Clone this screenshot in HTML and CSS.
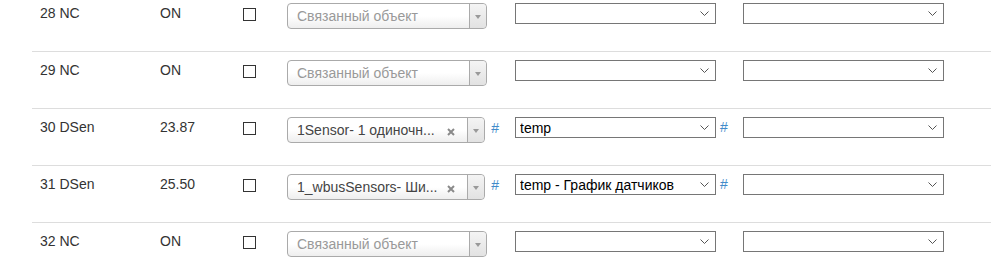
FILE: index.html
```html
<!DOCTYPE html>
<html lang="ru">
<head>
  <meta charset="UTF-8" />
  <meta name="viewport" content="width=device-width, initial-scale=1.0"/>
  <title>Порты</title>
  <link rel="stylesheet" href="styles.css">
</head>
<body>

  <div class="ports">

    <div class="row">
      <div class="cell">28 NC</div>
      <div class="cell">ON</div>
      <div class="cell"><input type="checkbox" class="chk"></div>
      <div class="cell">
        <div class="s2">
          <span class="s2-text empty">Связанный объект</span>
          <span class="s2-arrow"><b></b></span>
        </div>
      </div>
      <div class="cell">
        <span class="sel-wrap"><select class="sel"><option></option></select><svg class="chev" width="9" height="5" viewBox="0 0 9 5"><path d="M0.5 0.5L4.5 4.5L8.5 0.5" fill="none" stroke="#555"/></svg></span>
      </div>
      <div class="cell">
        <span class="sel-wrap"><select class="sel"><option></option></select><svg class="chev" width="9" height="5" viewBox="0 0 9 5"><path d="M0.5 0.5L4.5 4.5L8.5 0.5" fill="none" stroke="#555"/></svg></span>
      </div>
    </div>

    <div class="row">
      <div class="cell">29 NC</div>
      <div class="cell">ON</div>
      <div class="cell"><input type="checkbox" class="chk"></div>
      <div class="cell">
        <div class="s2">
          <span class="s2-text empty">Связанный объект</span>
          <span class="s2-arrow"><b></b></span>
        </div>
      </div>
      <div class="cell">
        <span class="sel-wrap"><select class="sel"><option></option></select><svg class="chev" width="9" height="5" viewBox="0 0 9 5"><path d="M0.5 0.5L4.5 4.5L8.5 0.5" fill="none" stroke="#555"/></svg></span>
      </div>
      <div class="cell">
        <span class="sel-wrap"><select class="sel"><option></option></select><svg class="chev" width="9" height="5" viewBox="0 0 9 5"><path d="M0.5 0.5L4.5 4.5L8.5 0.5" fill="none" stroke="#555"/></svg></span>
      </div>
    </div>

    <div class="row">
      <div class="cell">30 DSen</div>
      <div class="cell">23.87</div>
      <div class="cell"><input type="checkbox" class="chk"></div>
      <div class="cell">
        <div class="s2">
          <span class="s2-text">1Sensor- 1 одиночн...</span>
          <span class="s2-clear"><svg width="8" height="8" viewBox="0 0 8 8"><path d="M1 1L7 7M7 1L1 7" stroke="#8a8a8a" stroke-width="2"/></svg></span>
          <span class="s2-arrow"><b></b></span>
        </div>
        <a class="hash" href="#">#</a>
      </div>
      <div class="cell">
        <span class="sel-wrap"><select class="sel"><option>temp</option></select><svg class="chev" width="9" height="5" viewBox="0 0 9 5"><path d="M0.5 0.5L4.5 4.5L8.5 0.5" fill="none" stroke="#555"/></svg></span>
        <a class="hash sm" href="#">#</a>
      </div>
      <div class="cell">
        <span class="sel-wrap"><select class="sel"><option></option></select><svg class="chev" width="9" height="5" viewBox="0 0 9 5"><path d="M0.5 0.5L4.5 4.5L8.5 0.5" fill="none" stroke="#555"/></svg></span>
      </div>
    </div>

    <div class="row">
      <div class="cell">31 DSen</div>
      <div class="cell">25.50</div>
      <div class="cell"><input type="checkbox" class="chk"></div>
      <div class="cell">
        <div class="s2">
          <span class="s2-text">1_wbusSensors- Ши...</span>
          <span class="s2-clear"><svg width="8" height="8" viewBox="0 0 8 8"><path d="M1 1L7 7M7 1L1 7" stroke="#8a8a8a" stroke-width="2"/></svg></span>
          <span class="s2-arrow"><b></b></span>
        </div>
        <a class="hash" href="#">#</a>
      </div>
      <div class="cell">
        <span class="sel-wrap"><select class="sel"><option>temp - График датчиков</option></select><svg class="chev" width="9" height="5" viewBox="0 0 9 5"><path d="M0.5 0.5L4.5 4.5L8.5 0.5" fill="none" stroke="#555"/></svg></span>
        <a class="hash sm" href="#">#</a>
      </div>
      <div class="cell">
        <span class="sel-wrap"><select class="sel"><option></option></select><svg class="chev" width="9" height="5" viewBox="0 0 9 5"><path d="M0.5 0.5L4.5 4.5L8.5 0.5" fill="none" stroke="#555"/></svg></span>
      </div>
    </div>

    <div class="row">
      <div class="cell">32 NC</div>
      <div class="cell">ON</div>
      <div class="cell"><input type="checkbox" class="chk"></div>
      <div class="cell">
        <div class="s2">
          <span class="s2-text empty">Связанный объект</span>
          <span class="s2-arrow"><b></b></span>
        </div>
      </div>
      <div class="cell">
        <span class="sel-wrap"><select class="sel"><option></option></select><svg class="chev" width="9" height="5" viewBox="0 0 9 5"><path d="M0.5 0.5L4.5 4.5L8.5 0.5" fill="none" stroke="#555"/></svg></span>
      </div>
      <div class="cell">
        <span class="sel-wrap"><select class="sel"><option></option></select><svg class="chev" width="9" height="5" viewBox="0 0 9 5"><path d="M0.5 0.5L4.5 4.5L8.5 0.5" fill="none" stroke="#555"/></svg></span>
      </div>
    </div>

  </div>

</body>
</html>
```

FILE: styles.css
```css
*{margin:0;padding:0;box-sizing:border-box;}
body{font-family:'Liberation Sans',Arial,sans-serif;font-size:14px;line-height:20px;color:#333;background:#fff;overflow:hidden;}

.ports{margin:-6px 0 0 32px;}
.row{display:grid;grid-template-columns:120px 83px 44px 228px 228px 1fr;height:57px;border-top:1px solid #ddd;}
.cell{padding:8px;display:flex;align-items:flex-start;}

.chk{appearance:none;-webkit-appearance:none;width:13px;height:13px;border:1px solid #333;background:#fff;margin-top:5px;}

/* select2-like box */
.s2{display:flex;align-items:center;width:200px;height:26px;border:1px solid #aaa;border-radius:4px;background:linear-gradient(to bottom,#fff 0%,#fff 50%,#eee 100%);}
.s2-text{flex:1;min-width:0;padding-left:9px;white-space:nowrap;color:#444;}
.s2-text.empty{color:#999;}
.s2-clear{width:20px;margin-right:6px;display:flex;justify-content:center;padding-top:3px;}
.s2-arrow{width:17px;height:100%;border-left:1px solid #aaa;border-radius:0 4px 4px 0;background:linear-gradient(to bottom,#f4f4f4,#e2e2e2);display:flex;align-items:center;justify-content:center;}
.s2-arrow b{width:0;height:0;border-left:3px solid transparent;border-right:3px solid transparent;border-top:4px solid #999;margin-top:1px;}

.hash{color:#428bca;text-decoration:none;margin-left:6px;line-height:22px;}
.hash.sm{margin-left:4px;line-height:21px;}

/* plain select with a thin chevron */
.sel-wrap{position:relative;display:block;width:201px;height:21px;}
.sel{appearance:none;-webkit-appearance:none;display:block;width:201px;height:21px;padding:0 18px 0 4px;border:1px solid #767676;border-radius:0;background:#fff;font-family:'Liberation Sans',Arial,sans-serif;font-size:14px;color:#000;}
.chev{position:absolute;right:7px;top:8px;pointer-events:none;}
```
